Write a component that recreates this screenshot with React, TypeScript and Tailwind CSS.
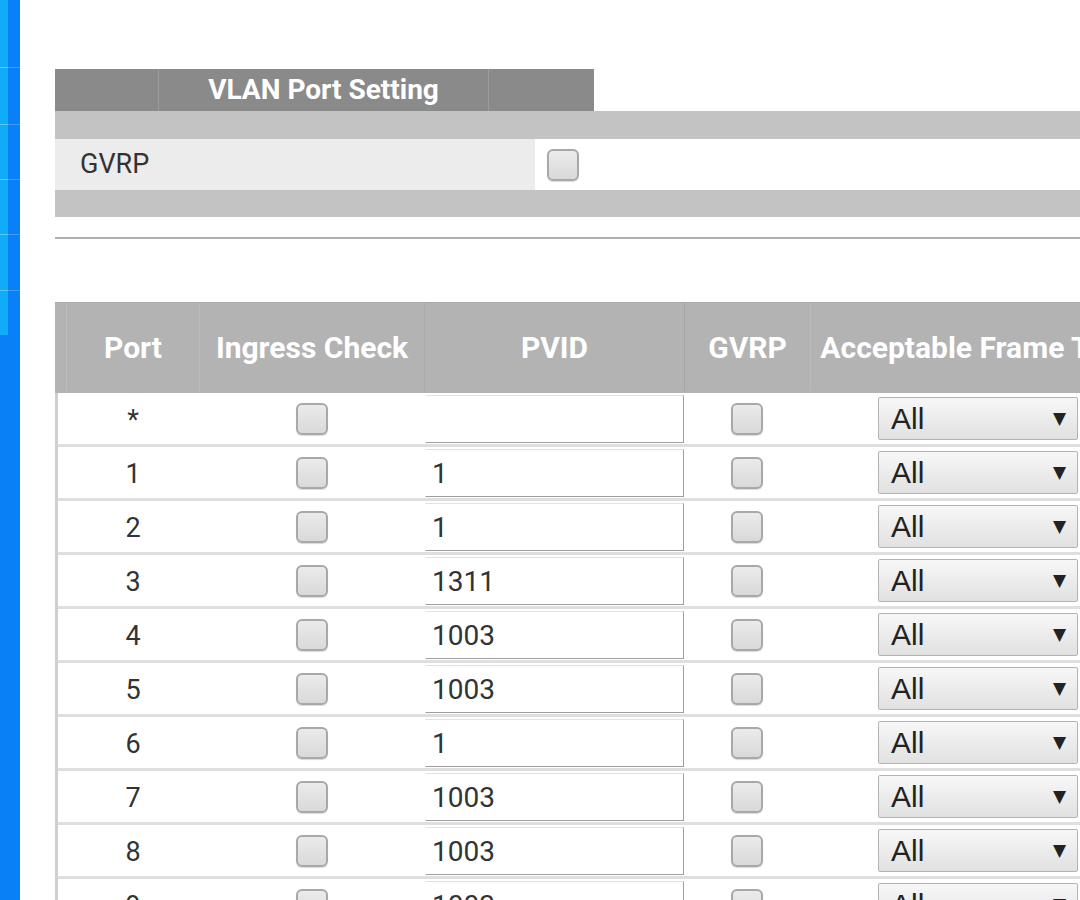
import React from 'react';

const rows = [
  { port: '*', pvid: '' },
  { port: '1', pvid: '1' },
  { port: '2', pvid: '1' },
  { port: '3', pvid: '1311' },
  { port: '4', pvid: '1003' },
  { port: '5', pvid: '1003' },
  { port: '6', pvid: '1' },
  { port: '7', pvid: '1003' },
  { port: '8', pvid: '1003' },
  { port: '9', pvid: '1003' },
];

function Checkbox() {
  return (
    <div className="w-8 h-8 rounded-[6px] border-2 border-[#a8a8a8] bg-linear-to-b from-[#ebebeb] to-[#d9d9d9] shadow-[0_1px_1px_rgba(0,0,0,0.15)]" />
  );
}

function FrameSelect() {
  return (
    <div className="w-[200px] h-[43px] flex items-center justify-between pl-3 pr-[11px] rounded-[2px] border border-[#b3b3b3] bg-linear-to-b from-[#f7f7f7] to-[#e1e1e1] text-[#222]">
      <span className="text-[30px] leading-none font-['Liberation_Sans',sans-serif]">All</span>
      <span className="text-[17px] leading-none font-['DejaVu_Sans',sans-serif]">▼</span>
    </div>
  );
}

function Sidebar() {
  // light strip with row lines, then plain blue below
  const blocks = [68, 57, 55, 55, 56, 44];
  return (
    <div className="w-5 shrink-0 h-full flex flex-col bg-[#0a80f6]">
      <div className="flex">
        <div className="w-2 flex flex-col bg-[#0fadf8]">
          {blocks.map((h, i) => (
            <div key={i} style={{ height: h }} className="border-b border-[#5ccaff] last:border-b-0" />
          ))}
        </div>
        <div className="w-3 flex flex-col">
          {blocks.map((h, i) => (
            <div key={i} style={{ height: h }} className="border-b border-[#3f9cff] last:border-b-0" />
          ))}
        </div>
      </div>
    </div>
  );
}

export default function App() {
  return (
    <div className="w-[1080px] h-[900px] overflow-hidden flex bg-white font-['Roboto',sans-serif]">
      <Sidebar />
      <div className="flex-1 pl-[35px] pt-[69px] overflow-hidden">
        <div className="w-[1200px]">
          {/* tab title */}
          <div className="flex w-[539px] h-[42px] bg-[#8a8a8a] text-white">
            <div className="w-[104px] border-r border-[#9c9c9c]" />
            <div className="w-[330px] border-r border-[#9c9c9c] flex items-center justify-center text-[28px] font-bold">
              VLAN Port Setting
            </div>
            <div className="flex-1" />
          </div>
          <div className="h-[28px] bg-[#c3c3c3]" />
          <div className="flex h-[51px]">
            <div className="w-[480px] bg-[#ececec] flex items-center pl-[25px] text-[27px] text-[#333]">GVRP</div>
            <div className="flex-1 bg-white flex items-center pl-3">
              <Checkbox />
            </div>
          </div>
          <div className="h-[27px] bg-[#c3c3c3]" />
          <div className="mt-5 h-[2px] bg-[#b0b0b0]" />

          {/* port table */}
          <div className="mt-[63px] w-[1091px]">
            <div className="flex h-[91px] pb-[2px] bg-[#b3b3b3] text-white font-bold text-[30px] border-t border-[#a9a9a9]">
              <div className="w-[12px] border-r border-[#bdbdbd]" />
              <div className="w-[132px] flex items-center justify-center">Port</div>
              <div className="w-[225px] border-l border-[#bcbcbc] flex items-center justify-center whitespace-nowrap">Ingress Check</div>
              <div className="w-[260px] border-l border-[#aaaaaa] flex items-center justify-center">PVID</div>
              <div className="w-[126px] border-l border-[#a4a4a4] flex items-center justify-center">GVRP</div>
              <div className="w-[336px] border-l border-[#bcbcbc] flex items-center justify-center whitespace-nowrap">Acceptable Frame Type</div>
            </div>
            <div className="border-l-[3px] border-[#cfcfcf]">
              {rows.map((r, i) => (
                <div key={i} className="flex h-[54px] border-b-[3px] border-[#dfdfdf] bg-white text-[27px] text-[#333]">
                  <div className="w-[9px]" />
                  <div className="w-[132px] flex items-center justify-center pt-[3px]">{r.port}</div>
                  <div className="w-[225px] flex items-center justify-center">
                    <Checkbox />
                  </div>
                  <div className="w-[260px] pl-px pt-[2px]">
                    <input
                      readOnly
                      value={r.pvid}
                      className="w-full h-[48px] pl-[6px] bg-white text-[28px] text-[#333] outline-none border border-t-[#e2e2e2] border-l-white border-r-[#9f9f9f] border-b-[#9f9f9f] font-['Roboto',sans-serif]"
                    />
                  </div>
                  <div className="w-[126px] flex items-center justify-center">
                    <Checkbox />
                  </div>
                  <div className="w-[336px] flex items-center justify-center">
                    <FrameSelect />
                  </div>
                </div>
              ))}
            </div>
          </div>
        </div>
      </div>
    </div>
  );
}
